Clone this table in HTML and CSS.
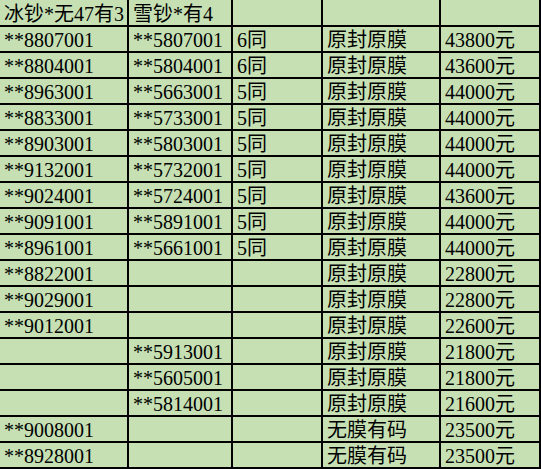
FILE: index.html
```html
<!DOCTYPE html>
<html lang="zh">
<head>
<meta charset="utf-8">
<title>钞</title>
<link rel="stylesheet" href="styles.css">
</head>
<body>
<div class="sheet">
  <div class="c">冰钞*无47有3</div><div class="c">雪钞*有4</div><div class="c"></div><div class="c"></div><div class="c"></div>
  <div class="c">**8807001</div><div class="c">**5807001</div><div class="c">6同</div><div class="c">原封原膜</div><div class="c">43800元</div>
  <div class="c">**8804001</div><div class="c">**5804001</div><div class="c">6同</div><div class="c">原封原膜</div><div class="c">43600元</div>
  <div class="c">**8963001</div><div class="c">**5663001</div><div class="c">5同</div><div class="c">原封原膜</div><div class="c">44000元</div>
  <div class="c">**8833001</div><div class="c">**5733001</div><div class="c">5同</div><div class="c">原封原膜</div><div class="c">44000元</div>
  <div class="c">**8903001</div><div class="c">**5803001</div><div class="c">5同</div><div class="c">原封原膜</div><div class="c">44000元</div>
  <div class="c">**9132001</div><div class="c">**5732001</div><div class="c">5同</div><div class="c">原封原膜</div><div class="c">44000元</div>
  <div class="c">**9024001</div><div class="c">**5724001</div><div class="c">5同</div><div class="c">原封原膜</div><div class="c">43600元</div>
  <div class="c">**9091001</div><div class="c">**5891001</div><div class="c">5同</div><div class="c">原封原膜</div><div class="c">44000元</div>
  <div class="c">**8961001</div><div class="c">**5661001</div><div class="c">5同</div><div class="c">原封原膜</div><div class="c">44000元</div>
  <div class="c">**8822001</div><div class="c"></div><div class="c"></div><div class="c">原封原膜</div><div class="c">22800元</div>
  <div class="c">**9029001</div><div class="c"></div><div class="c"></div><div class="c">原封原膜</div><div class="c">22800元</div>
  <div class="c">**9012001</div><div class="c"></div><div class="c"></div><div class="c">原封原膜</div><div class="c">22600元</div>
  <div class="c"></div><div class="c">**5913001</div><div class="c"></div><div class="c">原封原膜</div><div class="c">21800元</div>
  <div class="c"></div><div class="c">**5605001</div><div class="c"></div><div class="c">原封原膜</div><div class="c">21800元</div>
  <div class="c"></div><div class="c">**5814001</div><div class="c"></div><div class="c">原封原膜</div><div class="c">21600元</div>
  <div class="c">**9008001</div><div class="c"></div><div class="c"></div><div class="c">无膜有码</div><div class="c">23500元</div>
  <div class="c">**8928001</div><div class="c"></div><div class="c"></div><div class="c">无膜有码</div><div class="c">23500元</div>
</div>
</body>
</html>
```

FILE: styles.css
```css
html, body {
  margin: 0;
  padding: 0;
  background: #c6e0b4;
}
.sheet {
  display: grid;
  grid-template-columns: 127px 102px 88px 116px 98px;
  grid-template-rows: 25px repeat(17, 24px);
  gap: 2px;
  padding: 0 2px 2px 0;
  width: 539px;
  background: #000;
  font-family: "Liberation Serif", "Noto Sans CJK SC", serif;
  font-size: 20px;
  color: #000;
}
.c {
  background: #c6e0b4;
  display: flex;
  align-items: flex-end;
  padding: 0 2px 1px 4px;
  line-height: 20px;
  white-space: nowrap;
  overflow: hidden;
}
```
